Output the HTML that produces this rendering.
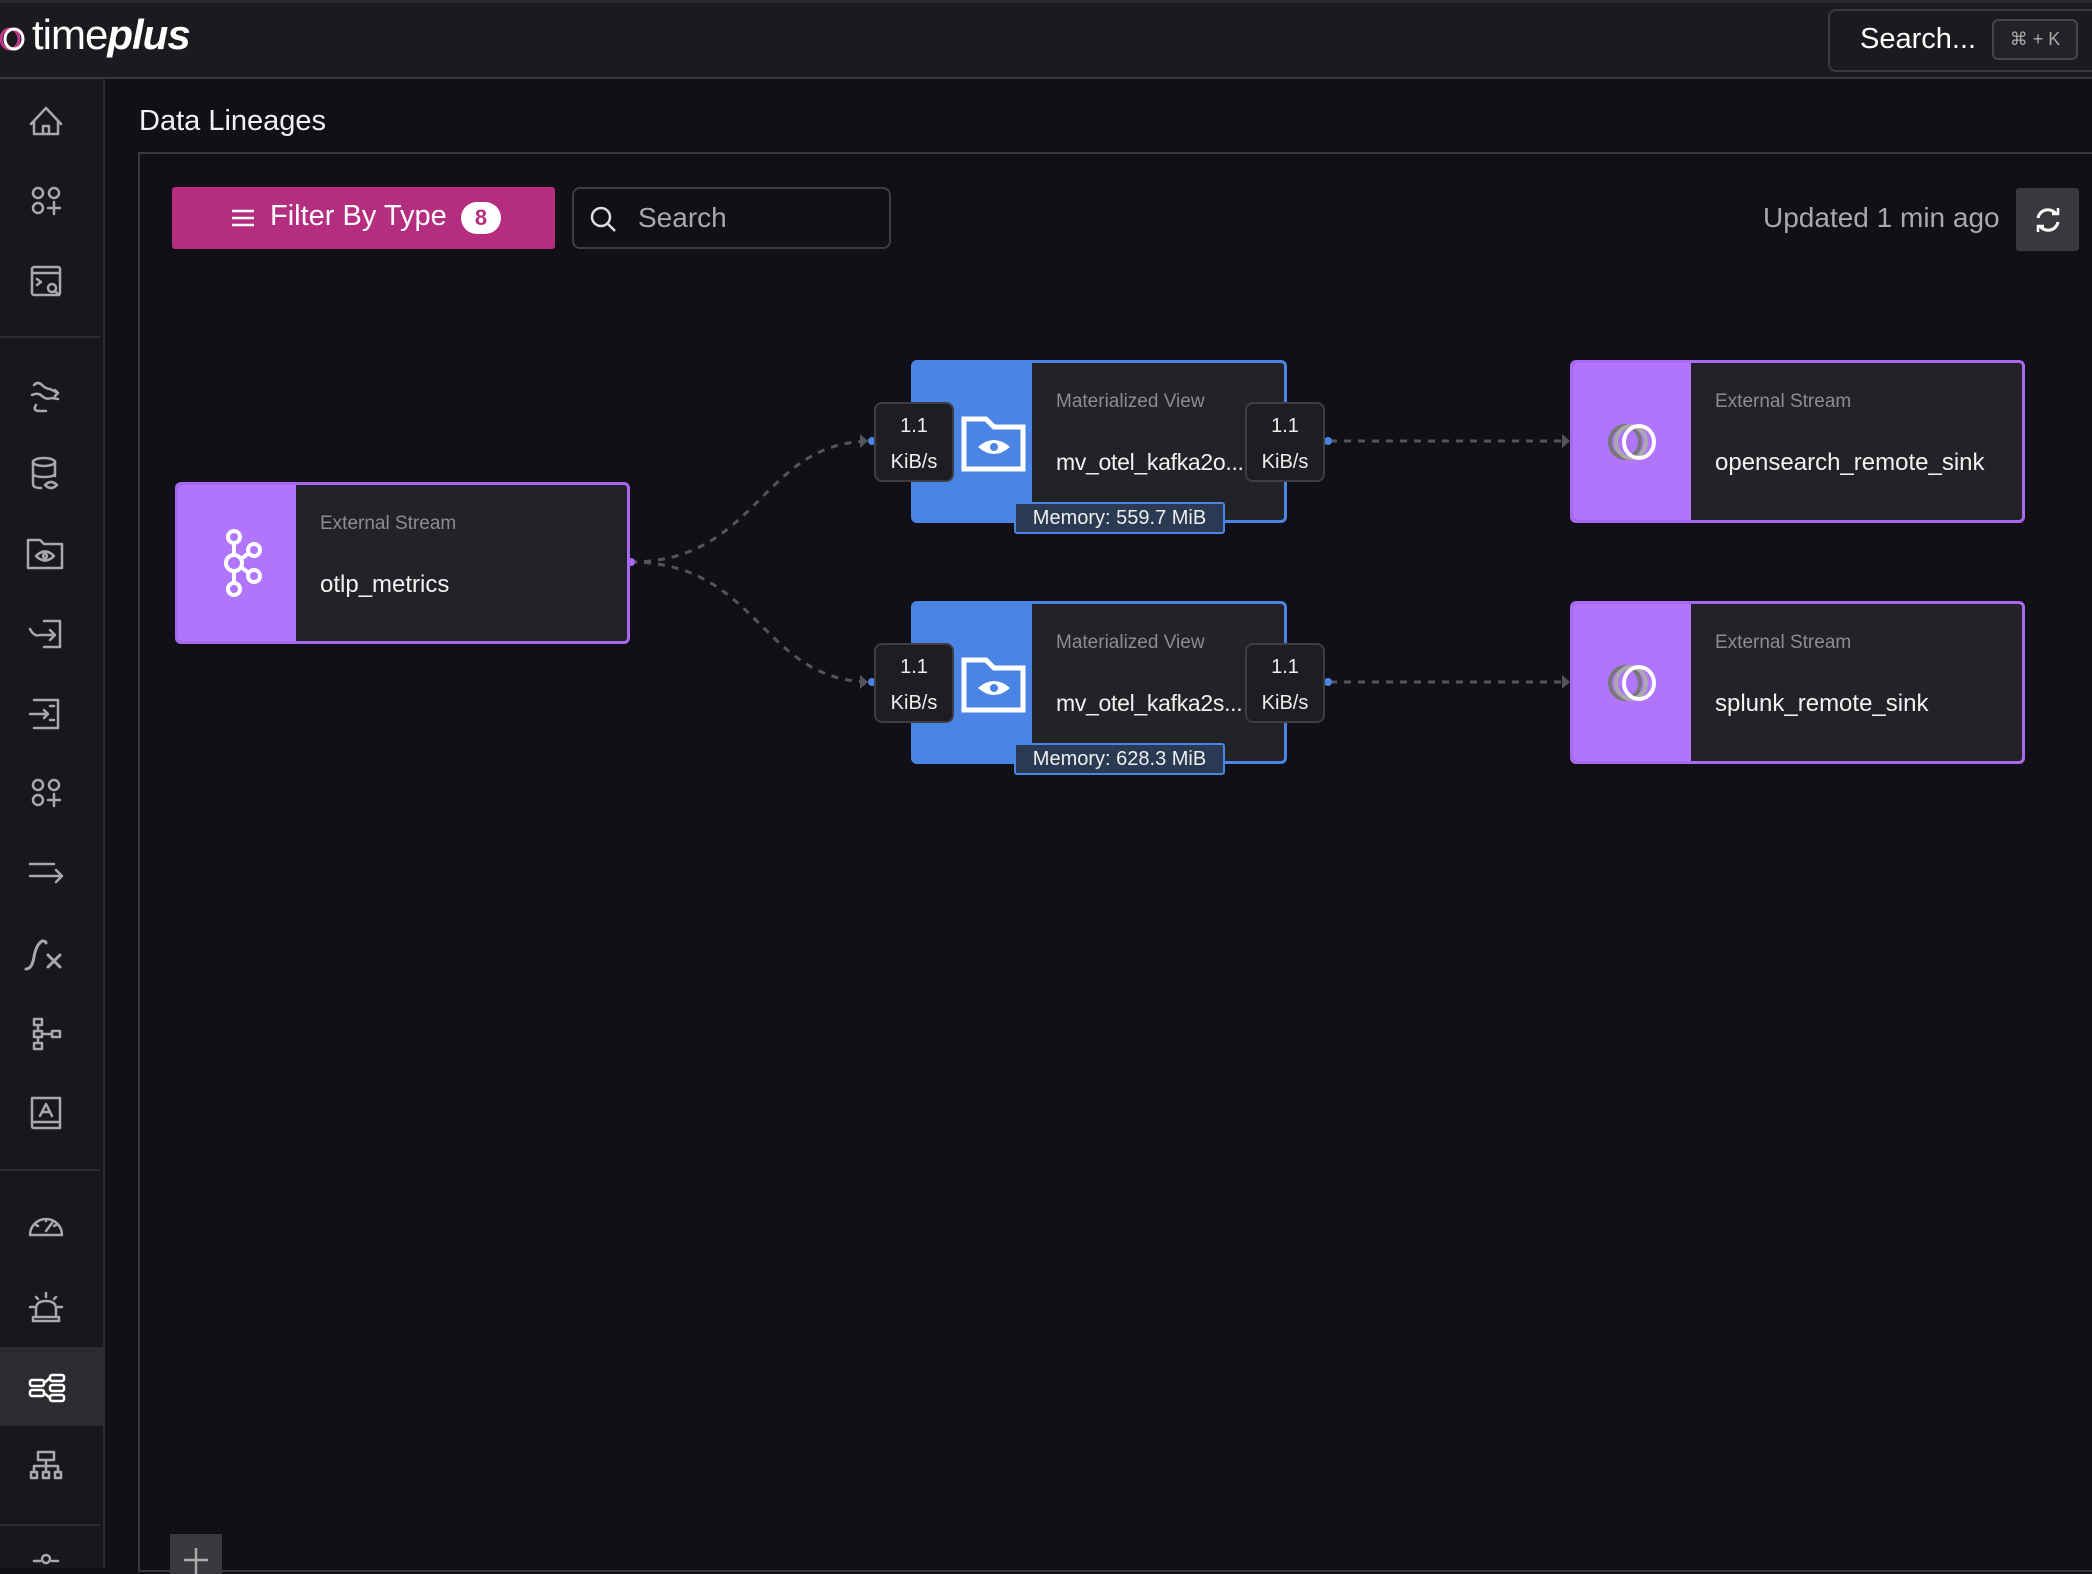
<!DOCTYPE html>
<html><head><meta charset="utf-8"><style>
*{box-sizing:border-box;margin:0;padding:0}
body{width:2092px;height:1568px;background:#111016;font-family:"Liberation Sans",sans-serif;overflow:hidden;position:relative;color:#fff}
.hdr{position:absolute;left:0;top:0;width:2092px;height:79px;background:#1b1a1f;border-top:3px solid #2a292e;border-bottom:2px solid #3a393e}
.side{position:absolute;left:0;top:79px;width:105px;height:1489px;background:#18171c;border-right:2px solid #2c2b30}
.ab{position:absolute}
.sep{position:absolute;left:0;width:100px;height:2px;background:#2e2d32}
.node{position:absolute;border:3px solid #a868f0;border-radius:6px;background:#232227;overflow:hidden}
.node .band{position:absolute;left:0;top:0;bottom:0;width:118px;background:#b075fb}
.node.mv{border-color:#4a84e4}
.node.mv .band{background:#4a84e4}
.node .t{position:absolute;left:142px;top:28px;font-size:19px;color:#8d8c92}
.node .n{position:absolute;left:142px;top:86px;font-size:24px;color:#f2f2f2;white-space:nowrap}
.node.mv .n{font-size:23px;letter-spacing:-0.3px}
.rate{position:absolute;width:80px;height:80px;background:#1e1d22;border:2px solid #3e3d43;border-radius:8px;color:#eee;font-size:20px;text-align:center;line-height:36px;padding-top:4px}
.mem{position:absolute;width:211px;height:32px;background:#2a3a52;border:2px solid #4a84e4;border-radius:3px;color:#eee;font-size:20px;text-align:center;line-height:28px}
</style></head><body>
<div class="hdr">
  <svg class="ab" style="left:0;top:20px" width="30" height="32" viewBox="0 0 30 32"><ellipse cx="10" cy="16" rx="9" ry="10" fill="none" stroke="#c03a8e" stroke-width="3"/><ellipse cx="14" cy="16" rx="9" ry="10" fill="none" stroke="#fff" stroke-width="3"/></svg>
  <div class="ab" style="left:32px;top:8px;font-size:42px;color:#fff;letter-spacing:-1px">time<b><i>plus</i></b></div>
  <div class="ab" style="left:1828px;top:6px;width:280px;height:63px;border:2px solid #3a393e;border-radius:8px"></div>
  <div class="ab" style="left:1860px;top:20px;font-size:29px;color:#fff">Search...</div>
  <div class="ab" style="left:1992px;top:16px;width:86px;height:41px;border:2px solid #46454b;border-radius:6px;background:#232227;color:#aaa;font-size:18px;line-height:37px;text-align:center">⌘ + K</div>
</div>
<div class="side">
  <div class="sep" style="top:257px"></div>
  <div class="sep" style="top:1090px"></div>
  <div class="sep" style="top:1445px"></div>
  <div class="ab" style="left:0;top:1268px;width:103px;height:79px;background:#2c2b30"></div>
</div>
<svg class="ab" style="left:0;top:79px" width="105" height="1489" fill="none" stroke="#a9a8ad" stroke-width="2.5" stroke-linejoin="round" stroke-linecap="round">
  <path d="M31 45 L46 29 L61 45 M34 42 V55 H58 V42 M43 55 V47 H49 V55"/>
  <g transform="translate(0,81)"><circle cx="38" cy="33" r="5"/><circle cx="54" cy="33" r="5"/><circle cx="38" cy="48" r="5"/><path d="M54 42 V54 M48 48 H60"/></g>
  <g transform="translate(0,158)"><rect x="32" y="30" width="28" height="28" rx="2"/><path d="M32 36 H60 M37 42 L41 45 L37 48"/><circle cx="52" cy="51" r="4"/><path d="M55 54 L59 58"/></g>
  <g transform="translate(0,276)"><path d="M34 30 q4 -4 8 0 t8 4 l8 4 M32 40 q6 -3 10 1 t10 2 l6 1 M36 50 q-4 6 4 6 h6"/><path d="M55 35 L58 38 L55 41"/></g>
  <g transform="translate(0,353)"><ellipse cx="44" cy="30" rx="11" ry="4"/><path d="M33 30 V52 q0 4 8 4 M55 30 V44 M33 41 q0 4 11 4 t11 -4"/><path d="M45 53 q6 -6 12 0 q-6 6 -12 0z"/></g>
  <g transform="translate(0,431)"><path d="M28 30 H40 L44 34 H62 V58 H28 Z"/><path d="M36 46 q9 -9 18 0 q-9 9 -18 0z"/><circle cx="45" cy="46" r="2"/></g>
  <g transform="translate(0,510)"><path d="M30 40 q4 8 10 6 H54 M50 41 L55 46 L50 51 M44 32 H60 V58 H44"/></g>
  <g transform="translate(0,591)"><path d="M34 30 H58 V58 H34 M30 44 H48 M44 40 L48 44 L44 48 M50 36 H54 M50 50 H54"/></g>
  <g transform="translate(0,673)"><circle cx="38" cy="33" r="5"/><circle cx="54" cy="33" r="5"/><circle cx="38" cy="48" r="5"/><path d="M54 42 V54 M48 48 H60"/></g>
  <g transform="translate(0,753)"><path d="M30 44 H62 M56 38 L62 44 L56 50 M30 32 H54"/></g>
  <g transform="translate(0,832)"><path d="M26 58 q6 0 8 -12 t8 -16 q4 0 4 2 M48 44 L60 56 M60 44 L48 56" stroke-width="3"/></g>
  <g transform="translate(0,912)"><rect x="34" y="28" width="8" height="6"/><rect x="34" y="40" width="8" height="6"/><rect x="34" y="52" width="8" height="6"/><rect x="52" y="40" width="8" height="6"/><path d="M38 34 V40 M38 46 V52 M42 43 H52"/></g>
  <g transform="translate(0,991)"><path d="M32 28 H60 V58 H34 q-2 0 -2 -2 Z M32 52 H60 M40 46 L46 34 L52 46 M42 42 H50"/></g>
  <g transform="translate(0,1104)"><path d="M30 52 a16 16 0 1 1 32 0 Z M46 48 L52 40 M36 42 l2 1 M56 42 l-2 1 M46 36 v2"/></g>
  <g transform="translate(0,1184)"><path d="M36 54 V46 q0 -8 10 -8 q10 0 10 8 V54 M33 54 H59 V58 H33 Z M46 30 V34 M30 44 H34 M58 44 H62 M36 34 L38 36 M56 34 L54 36"/></g>
  <g transform="translate(0,1268)" stroke="#fff"><rect x="30" y="33" width="14" height="6" rx="2"/><rect x="30" y="43" width="14" height="6" rx="2"/><rect x="50" y="28" width="14" height="6" rx="2"/><rect x="50" y="38" width="14" height="6" rx="2"/><rect x="50" y="48" width="14" height="6" rx="2"/><path d="M44 36 L50 31 M44 46 L50 51"/></g>
  <g transform="translate(0,1345)"><rect x="38" y="28" width="16" height="8"/><path d="M46 36 V42 M34 42 H58 M34 42 V48 M46 42 V48 M58 42 V48"/><rect x="31" y="48" width="6" height="6"/><rect x="43" y="48" width="6" height="6"/><rect x="55" y="48" width="6" height="6"/></g>
  <g transform="translate(0,1430)"><circle cx="46" cy="50" r="4"/><path d="M34 52 h6 M52 52 h6"/></g>
</svg>
<div class="ab" style="left:139px;top:105px;font-size:29px;color:#f2f2f2">Data Lineages</div>
<div class="ab" style="left:138px;top:152px;width:1960px;height:1420px;border:2px solid #3a393e"></div>
<div class="ab" style="left:172px;top:187px;width:383px;height:62px;background:#b52d7e;border-radius:3px"></div>
<svg class="ab" style="left:230px;top:207px" width="26" height="22" stroke="#fff" stroke-width="2.5"><path d="M2 4 H24 M2 11 H24 M2 18 H24"/></svg>
<div class="ab" style="left:270px;top:200px;font-size:29px;color:#fff">Filter By Type</div>
<div class="ab" style="left:461px;top:202px;width:40px;height:32px;border-radius:16px;background:#fff;color:#b52d7e;font-size:22px;text-align:center;line-height:32px;font-weight:bold">8</div>
<div class="ab" style="left:572px;top:187px;width:319px;height:62px;border:2px solid #3e3d43;border-radius:8px"></div>
<svg class="ab" style="left:588px;top:204px" width="30" height="30" fill="none" stroke="#ddd" stroke-width="2.5"><circle cx="13" cy="13" r="9"/><path d="M20 20 L27 27"/></svg>
<div class="ab" style="left:638px;top:202px;font-size:28px;color:#a9a8ad">Search</div>
<div class="ab" style="left:1763px;top:202px;font-size:28px;color:#a9a8ad">Updated 1 min ago</div>
<div class="ab" style="left:2016px;top:188px;width:63px;height:63px;background:#3a393e;border-radius:3px"></div>
<svg class="ab" style="left:2034px;top:206px" width="28" height="28" fill="none" stroke="#fff" stroke-width="3"><path d="M4 12 a10 10 0 0 1 18 -4 M24 16 a10 10 0 0 1 -18 4"/><path d="M18 8 H24 V2 M10 20 H4 V26" stroke-width="2.5"/></svg>

<svg class="ab" style="left:0;top:0" width="2092" height="1568" fill="none">
  <g stroke="#55545a" stroke-width="3" stroke-dasharray="7 7">
    <path d="M630 562 C760 562 760 441 872 441"/>
    <path d="M630 562 C760 562 760 682 872 682"/>
    <path d="M1330 441 H1562"/>
    <path d="M1330 682 H1562"/>
  </g>
  <g fill="#55545a"><path d="M1562 434 L1570 441 L1562 448Z"/><path d="M1562 675 L1570 682 L1562 689Z"/><path d="M860 434 L868 441 L860 448Z"/><path d="M860 675 L868 682 L860 689Z"/></g>
  <g fill="#4a84e4"><circle cx="872" cy="441" r="4"/><circle cx="872" cy="682" r="4"/><circle cx="1328" cy="441" r="4"/><circle cx="1328" cy="682" r="4"/></g>
  <circle cx="631" cy="562" r="4" fill="#a868f0"/>
</svg>

<div class="node" style="left:175px;top:482px;width:455px;height:162px"><div class="band"></div><div class="t">External Stream</div><div class="n">otlp_metrics</div></div>
<svg class="ab" style="left:218px;top:528px" width="50" height="70" fill="none" stroke="#fff" stroke-width="4"><circle cx="16" cy="9" r="6"/><circle cx="16" cy="35" r="8"/><circle cx="16" cy="61" r="6"/><circle cx="36" cy="22" r="6"/><circle cx="36" cy="48" r="6"/><path d="M16 15 V27 M16 43 V55 M23 31 L31 25 M23 39 L31 45"/></svg>

<div class="node" style="left:1570px;top:360px;width:455px;height:163px"><div class="band"></div><div class="t">External Stream</div><div class="n">opensearch_remote_sink</div></div>
<div class="node" style="left:1570px;top:601px;width:455px;height:163px"><div class="band"></div><div class="t">External Stream</div><div class="n">splunk_remote_sink</div></div>
<svg class="ab" style="left:1605px;top:418px" width="60" height="50" fill="none" stroke-width="4"><ellipse cx="20" cy="24" rx="15" ry="16" stroke="#777"/><ellipse cx="26" cy="24" rx="15" ry="16" stroke="#aaa"/><ellipse cx="34" cy="24" rx="15" ry="16" stroke="#fff"/></svg>
<svg class="ab" style="left:1605px;top:659px" width="60" height="50" fill="none" stroke-width="4"><ellipse cx="20" cy="24" rx="15" ry="16" stroke="#777"/><ellipse cx="26" cy="24" rx="15" ry="16" stroke="#aaa"/><ellipse cx="34" cy="24" rx="15" ry="16" stroke="#fff"/></svg>

<div class="node mv" style="left:911px;top:360px;width:376px;height:163px"><div class="band"></div><div class="t">Materialized View</div><div class="n">mv_otel_kafka2o...</div></div>
<div class="node mv" style="left:911px;top:601px;width:376px;height:163px"><div class="band"></div><div class="t">Materialized View</div><div class="n">mv_otel_kafka2s...</div></div>
<svg class="ab" style="left:960px;top:415px" width="68" height="58" fill="none" stroke="#fff" stroke-width="5"><path d="M4 4 H26 L34 12 H63 V54 H4 Z"/><path d="M18 32 q16 -14 32 0 q-16 14 -32 0z" fill="#fff" stroke="none"/><circle cx="34" cy="32" r="4" fill="#4a84e4" stroke="none"/></svg>
<svg class="ab" style="left:960px;top:656px" width="68" height="58" fill="none" stroke="#fff" stroke-width="5"><path d="M4 4 H26 L34 12 H63 V54 H4 Z"/><path d="M18 32 q16 -14 32 0 q-16 14 -32 0z" fill="#fff" stroke="none"/><circle cx="34" cy="32" r="4" fill="#4a84e4" stroke="none"/></svg>

<div class="rate" style="left:874px;top:402px">1.1<br>KiB/s</div>
<div class="rate" style="left:1245px;top:402px">1.1<br>KiB/s</div>
<div class="rate" style="left:874px;top:643px">1.1<br>KiB/s</div>
<div class="rate" style="left:1245px;top:643px">1.1<br>KiB/s</div>
<div class="mem" style="left:1014px;top:502px">Memory: 559.7 MiB</div>
<div class="mem" style="left:1014px;top:743px">Memory: 628.3 MiB</div>

<div class="ab" style="left:170px;top:1534px;width:52px;height:40px;background:#3a393e"></div>
<svg class="ab" style="left:182px;top:1546px" width="28" height="28" stroke="#aaa" stroke-width="2.5"><path d="M14 2 V28 M2 14 H26"/></svg>
</body></html>
